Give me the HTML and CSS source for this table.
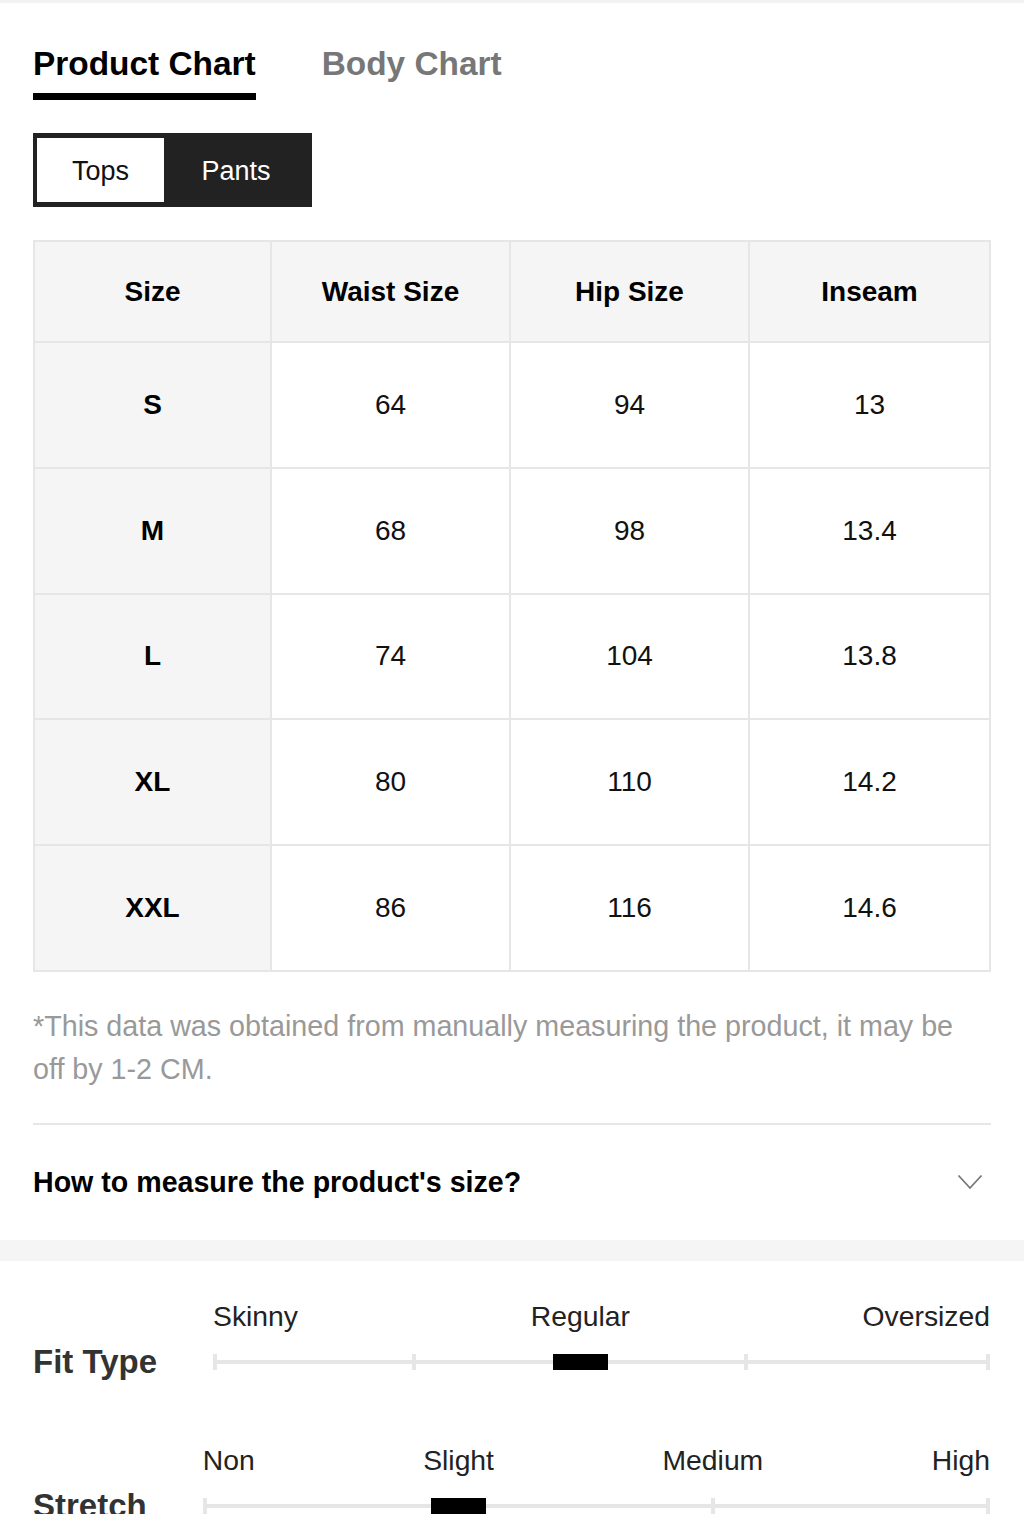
FILE: index.html
```html
<!DOCTYPE html>
<html lang="en">
<head>
<meta charset="utf-8">
<title>Size Chart</title>
<link rel="stylesheet" href="styles.css">
</head>
<body>
<div class="top-line"></div>
<section class="chart-section">
  <nav class="tabs">
    <div class="tab tab-active">Product Chart</div>
    <div class="tab">Body Chart</div>
  </nav>
  <div class="toggle">
    <div class="toggle-btn toggle-on">Tops</div>
    <div class="toggle-btn toggle-off">Pants</div>
  </div>
  <table class="size-table">
    <colgroup><col class="col-a"><col class="col-b"><col class="col-b"><col></colgroup>
    <thead>
      <tr><th>Size</th><th>Waist Size</th><th>Hip Size</th><th>Inseam</th></tr>
    </thead>
    <tbody>
      <tr><td class="size">S</td><td>64</td><td>94</td><td>13</td></tr>
      <tr><td class="size">M</td><td>68</td><td>98</td><td>13.4</td></tr>
      <tr><td class="size">L</td><td>74</td><td>104</td><td>13.8</td></tr>
      <tr><td class="size">XL</td><td>80</td><td>110</td><td>14.2</td></tr>
      <tr><td class="size">XXL</td><td>86</td><td>116</td><td>14.6</td></tr>
    </tbody>
  </table>
  <p class="note">*This data was obtained from manually measuring the product, it may be off by 1-2 CM.</p>
  <div class="divider"></div>
  <div class="accordion">
    <span class="accordion-title">How to measure the product's size?</span>
    <svg class="chevron" width="26" height="16" viewBox="0 0 26 16"><polyline points="1.5,1.5 13,14 24.5,1.5" fill="none" stroke="#777" stroke-width="1.8"/></svg>
  </div>
</section>
<div class="band"></div>
<section class="fit-section">
  <div class="fit-row">
    <div class="fit-label">Fit Type</div>
    <div class="slider">
      <div class="slider-labels"><span>Skinny</span><span>Regular</span><span>Oversized</span></div>
      <div class="track">
        <span class="tick" style="left:0"></span>
        <span class="tick" style="left:25.6%"></span>
        <span class="tick" style="left:68.3%"></span>
        <span class="tick tick-end"></span>
        <span class="knob" style="left:43.8%"></span>
      </div>
    </div>
  </div>
  <div class="fit-row">
    <div class="fit-label">Stretch</div>
    <div class="slider">
      <div class="slider-labels"><span>Non</span><span>Slight</span><span>Medium</span><span>High</span></div>
      <div class="track">
        <span class="tick" style="left:0"></span>
        <span class="tick" style="left:64.5%"></span>
        <span class="tick tick-end"></span>
        <span class="knob" style="left:29%"></span>
      </div>
    </div>
  </div>
</section>
</body>
</html>
```
FILE: styles.css
```css
* { box-sizing: border-box; }
html, body { margin: 0; padding: 0; background: #fff; }
body {
  font-family: "Liberation Sans", Arial, Helvetica, sans-serif;
  color: #111;
  width: 1024px;
}
.top-line { height: 3px; background: #f2f2f2; }
.chart-section { padding: 0 33px; }
.tabs {
  display: flex;
  gap: 66px;
  margin-top: 44px;
}
.tab {
  font-size: 33.4px;
  font-weight: 700;
  line-height: 33px;
  color: #777;
  padding-bottom: 13px;
  border-bottom: 7px solid transparent;
}
.tab-active { color: #000; border-bottom-color: #000; }
.toggle {
  display: flex;
  width: 279px;
  height: 74px;
  margin-top: 33px;
  background: #222;
  border: 4px solid #222;
  border-top-width: 5px;
  border-bottom-width: 5px;
}
.toggle-btn {
  display: flex;
  align-items: center;
  justify-content: center;
  font-size: 27px;
  padding-top: 2px;
}
.toggle-on { width: 127px; background: #fff; color: #111; }
.toggle-off { flex: 1; color: #fff; }
.size-table {
  margin-top: 33px;
  width: 958px;
  border-collapse: collapse;
  table-layout: fixed;
  border: 2px solid #e6e6e6;
}
.col-a { width: 237px; }
.col-b { width: 239px; }
.size-table th, .size-table td {
  border: 2px solid #e6e6e6;
  text-align: center;
  vertical-align: middle;
  font-size: 28px;
  padding: 0;
}
.size-table th {
  height: 101px;
  background: #f5f5f5;
  font-weight: 700;
  color: #000;
}
.size-table td { height: 125.8px; color: #111; }
.size-table td.size { background: #f5f5f5; font-weight: 700; color: #000; }
.note {
  margin: 33px 0 0;
  max-width: 935px;
  font-size: 28.7px;
  line-height: 43px;
  color: #999;
}
.divider { margin-top: 32px; height: 2px; background: #e6e6e6; }
.accordion {
  display: flex;
  align-items: center;
  justify-content: space-between;
  height: 115px;
}
.accordion-title {
  font-size: 28.6px;
  font-weight: 700;
  color: #000;
  line-height: 34px;
}
.chevron { margin-right: 8px; display: block; }
.band { height: 21px; background: #f5f5f5; }
.fit-section { padding: 38px 34px 0 33px; }
.fit-row {
  display: flex;
  align-items: flex-end;
  gap: 56px;
}
.fit-row + .fit-row { margin-top: 73px; }
.fit-label {
  font-size: 33px;
  font-weight: 700;
  color: #333;
  line-height: 16px;
  white-space: nowrap;
}
.slider { flex: 1; }
.slider-labels {
  display: flex;
  justify-content: space-between;
  font-size: 28.3px;
  line-height: 34px;
  color: #222;
}
.track {
  position: relative;
  height: 4px;
  margin: 27px 0 6px;
  background: #e6e6e6;
}
.tick {
  position: absolute;
  top: -6px;
  width: 4px;
  height: 16px;
  background: #e6e6e6;
}
.tick-end { right: 0; }
.knob {
  position: absolute;
  top: -6px;
  width: 55px;
  height: 16px;
  background: #000;
}
```
